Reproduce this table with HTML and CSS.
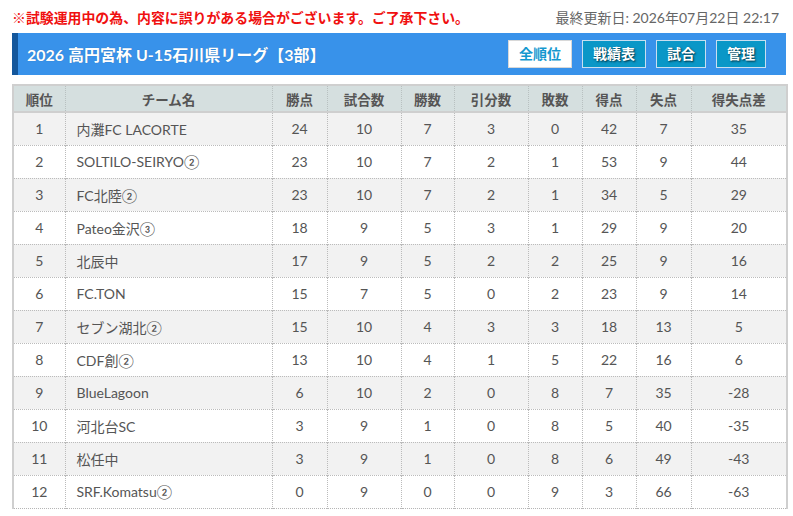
FILE: index.html
```html
<!DOCTYPE html>
<html lang="ja">
<head>
<meta charset="utf-8">
<title>2026 高円宮杯 U-15石川県リーグ【3部】</title>
<link rel="stylesheet" href="styles.css">
</head>
<body>
<div class="page">
  <div class="topline">
    <p class="notice">※試験運用中の為、内容に誤りがある場合がございます。ご了承下さい。</p>
    <p class="updated">最終更新日: 2026年07月22日 22:17</p>
  </div>
  <div class="titlebar">
    <h1 class="title">2026 高円宮杯 U-15石川県リーグ【3部】</h1>
    <nav class="btns">
      <a class="btn btn-active">全順位</a>
      <a class="btn">戦績表</a>
      <a class="btn">試合</a>
      <a class="btn">管理</a>
    </nav>
  </div>
  <table class="standings">
    <colgroup>
      <col class="c-rank"><col class="c-team"><col class="c-pts"><col class="c-gp"><col class="c-w"><col class="c-d"><col class="c-l"><col class="c-gf"><col class="c-ga"><col class="c-gd">
    </colgroup>
    <thead>
      <tr><th>順位</th><th>チーム名</th><th>勝点</th><th>試合数</th><th>勝数</th><th>引分数</th><th>敗数</th><th>得点</th><th>失点</th><th>得失点差</th></tr>
    </thead>
    <tbody>
      <tr><td>1</td><td class="team">内灘FC LACORTE</td><td>24</td><td>10</td><td>7</td><td>3</td><td>0</td><td>42</td><td>7</td><td>35</td></tr>
      <tr><td>2</td><td class="team">SOLTILO-SEIRYO②</td><td>23</td><td>10</td><td>7</td><td>2</td><td>1</td><td>53</td><td>9</td><td>44</td></tr>
      <tr><td>3</td><td class="team">FC北陸②</td><td>23</td><td>10</td><td>7</td><td>2</td><td>1</td><td>34</td><td>5</td><td>29</td></tr>
      <tr><td>4</td><td class="team">Pateo金沢③</td><td>18</td><td>9</td><td>5</td><td>3</td><td>1</td><td>29</td><td>9</td><td>20</td></tr>
      <tr><td>5</td><td class="team">北辰中</td><td>17</td><td>9</td><td>5</td><td>2</td><td>2</td><td>25</td><td>9</td><td>16</td></tr>
      <tr><td>6</td><td class="team">FC.TON</td><td>15</td><td>7</td><td>5</td><td>0</td><td>2</td><td>23</td><td>9</td><td>14</td></tr>
      <tr><td>7</td><td class="team">セブン湖北②</td><td>15</td><td>10</td><td>4</td><td>3</td><td>3</td><td>18</td><td>13</td><td>5</td></tr>
      <tr><td>8</td><td class="team">CDF創②</td><td>13</td><td>10</td><td>4</td><td>1</td><td>5</td><td>22</td><td>16</td><td>6</td></tr>
      <tr><td>9</td><td class="team">BlueLagoon</td><td>6</td><td>10</td><td>2</td><td>0</td><td>8</td><td>7</td><td>35</td><td>-28</td></tr>
      <tr><td>10</td><td class="team">河北台SC</td><td>3</td><td>9</td><td>1</td><td>0</td><td>8</td><td>5</td><td>40</td><td>-35</td></tr>
      <tr><td>11</td><td class="team">松任中</td><td>3</td><td>9</td><td>1</td><td>0</td><td>8</td><td>6</td><td>49</td><td>-43</td></tr>
      <tr><td>12</td><td class="team">SRF.Komatsu②</td><td>0</td><td>9</td><td>0</td><td>0</td><td>9</td><td>3</td><td>66</td><td>-63</td></tr>
    </tbody>
  </table>
</div>
</body>
</html>
```

FILE: styles.css
```css
* { box-sizing: border-box; }
html, body { margin: 0; padding: 0; background: #fff; }
body {
  font-family: Lato, "Noto Sans CJK JP", sans-serif;
  color: #555;
}
.page {
  width: 774px;
  margin-left: 12px;
}
.topline {
  display: flex;
  justify-content: space-between;
  align-items: center;
  height: 33px;
  padding: 1px 7px 0 0;
}
.notice {
  margin: 0;
  color: #f01010;
  font-weight: bold;
  font-size: 13.9px;
}
.updated {
  margin: 0;
  color: #666;
  font-size: 14px;
}
.titlebar {
  display: flex;
  align-items: center;
  justify-content: space-between;
  height: 42px;
  background: #3892ea;
  border-left: 6px solid #14579c;
  padding: 0 20px 0 9px;
}
.title {
  margin: 0;
  font-size: 16px;
  font-weight: bold;
  color: #fff;
  text-shadow: 0 0 1px rgba(0,0,0,0.25);
}
.btns {
  display: flex;
  gap: 10px;
}
.btn {
  display: block;
  height: 28px;
  line-height: 26px;
  padding: 0 10px;
  border: 1px solid #c9dff0;
  background: #0a97c7;
  color: #fff;
  font-size: 14px;
  font-weight: bold;
  text-shadow: 1px 1px 2px rgba(0,0,0,0.7);
}
.btn-active {
  background: #fff;
  color: #1598cf;
  border-color: #d8d8d8;
  text-shadow: none;
}
.c-rank { width: 52px; }
.c-team { width: 207px; }
.c-pts { width: 55px; }
.c-gp { width: 74px; }
.c-w { width: 53px; }
.c-d { width: 74px; }
.c-l { width: 54px; }
.c-gf { width: 54px; }
.c-ga { width: 55px; }
.c-gd { width: 96px; }
.standings {
  margin-top: 9px;
  width: 774px;
  table-layout: fixed;
  border-collapse: collapse;
  border: 2px solid #cfcfcf;
  border-bottom: 1px dotted #b5b5b5;
}
.standings th {
  height: 27px;
  padding: 0;
  background: #d5dfdf;
  font-size: 13.5px;
  font-weight: bold;
  color: #555;
  border-left: 1px dotted #b8c0c0;
  border-bottom: 2px solid #cfcfcf;
  text-align: center;
}
.standings th:first-child { border-left: none; }
.standings td {
  height: 33px;
  padding: 0;
  font-size: 14px;
  color: #555;
  text-align: center;
  border-left: 1px dotted #bbb;
  border-top: 1px dotted #bbb;
}
.standings td:first-child { border-left: none; }
.standings tbody tr:first-child td { border-top: none; }
.standings tbody tr:nth-child(odd) td { background: #f2f2f2; }
.standings td.team {
  text-align: left;
  padding-left: 11px;
}
```
